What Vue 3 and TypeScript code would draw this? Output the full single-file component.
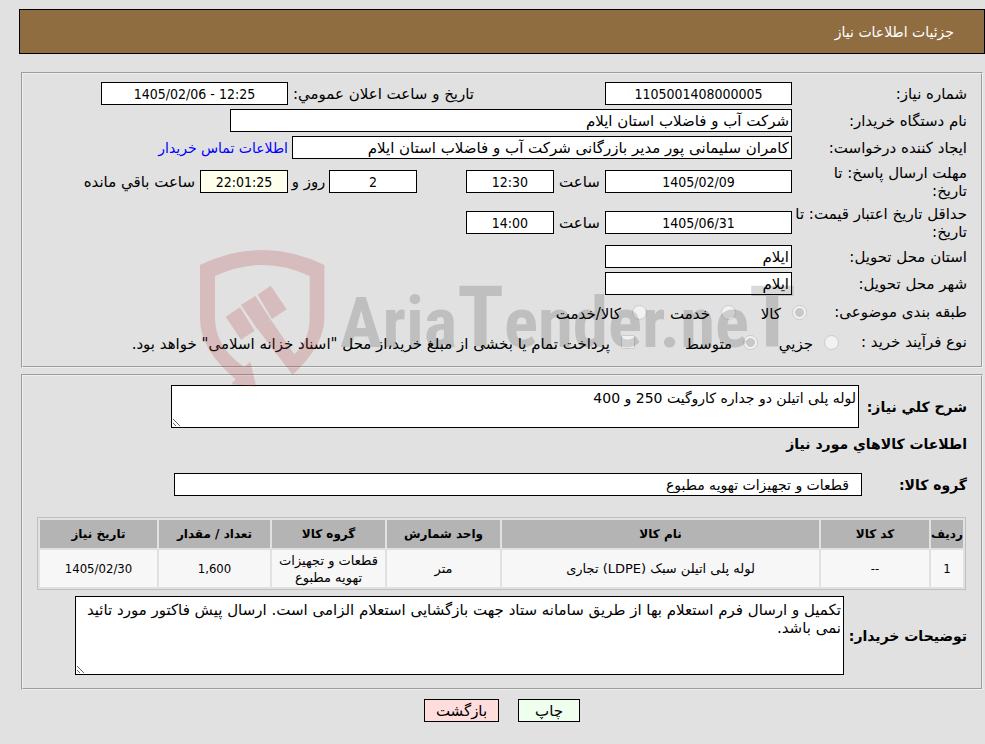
<script setup lang="ts">
import { ref } from 'vue'

interface Item {
  row: number
  code: string
  name: string
  unit: string
  group: string
  amount: string
  date: string
}

const category = ref('goods')
const process = ref('medium')
const treasury = ref(false)

const items: Item[] = [
  {
    row: 1,
    code: '--',
    name: 'لوله پلی اتیلن سبک (LDPE) تجاری',
    unit: 'متر',
    group: 'قطعات و تجهیزات تهویه مطبوع',
    amount: '1,600',
    date: '1405/02/30',
  },
]

const summary = 'لوله پلی اتیلن دو جداره کاروگیت 250 و 400'
const notes =
  'تکمیل و ارسال فرم استعلام بها از طریق سامانه ستاد جهت بازگشایی استعلام الزامی است. ارسال پیش فاکتور مورد تائید نمی باشد.'
</script>

<template>
  <main class="page" dir="rtl">
    <header class="title-bar">جزئیات اطلاعات نیاز</header>

    <fieldset class="panel info">
      <div class="row">
        <label class="caption" for="need-no">شماره نیاز:</label>
        <input id="need-no" class="field w-std center" readonly value="1105001408000005" />
        <label class="announce" for="announce">تاريخ و ساعت اعلان عمومي:</label>
        <input id="announce" class="field w-std center" dir="ltr" readonly value="1405/02/06 - 12:25" />
      </div>
      <div class="row">
        <label class="caption" for="buyer">نام دستگاه خریدار:</label>
        <input id="buyer" class="field w-buyer" readonly value="شرکت آب و فاضلاب استان ایلام" />
      </div>
      <div class="row">
        <label class="caption" for="creator">ایجاد کننده درخواست:</label>
        <input id="creator" class="field w-creator" readonly value="کامران سلیمانی پور مدیر بازرگانی شرکت آب و فاضلاب استان ایلام" />
        <a class="contact" href="#contact">اطلاعات تماس خریدار</a>
      </div>
      <div class="row tall">
        <label class="caption" for="reply-date">مهلت ارسال پاسخ: تا<br />تاریخ:</label>
        <input id="reply-date" class="field w-std center" readonly value="1405/02/09" />
        <label class="hour" for="reply-hour">ساعت</label>
        <input id="reply-hour" class="field w-small center" readonly value="12:30" />
        <input id="days" class="field w-small center days" readonly value="2" />
        <label class="day-word" for="days">روز و</label>
        <input id="remain" class="field w-small center timer" readonly value="22:01:25" />
        <label class="remain-word" for="remain">ساعت باقي مانده</label>
      </div>
      <div class="row tall">
        <label class="caption" for="price-date">حداقل تاریخ اعتبار قیمت: تا<br />تاریخ:</label>
        <input id="price-date" class="field w-std center" readonly value="1405/06/31" />
        <label class="hour" for="price-hour">ساعت</label>
        <input id="price-hour" class="field w-small center" readonly value="14:00" />
      </div>
      <div class="row">
        <label class="caption" for="province">استان محل تحویل:</label>
        <input id="province" class="field w-std" readonly value="ایلام" />
      </div>
      <div class="row">
        <label class="caption" for="city">شهر محل تحویل:</label>
        <input id="city" class="field w-std" readonly value="ایلام" />
      </div>
      <div class="row options" role="radiogroup" aria-labelledby="category-caption">
        <span id="category-caption" class="caption category">طبقه بندی موضوعی:</span>
        <label class="option o-goods"><input v-model="category" type="radio" name="category" value="goods" disabled /><span>کالا</span></label>
        <label class="option o-service"><input v-model="category" type="radio" name="category" value="service" disabled /><span>خدمت</span></label>
        <label class="option"><input v-model="category" type="radio" name="category" value="both" disabled /><span>کالا/خدمت</span></label>
      </div>
      <div class="row options" role="radiogroup" aria-labelledby="process-caption">
        <span id="process-caption" class="caption process">نوع فرآیند خرید :</span>
        <label class="option o-minor"><input v-model="process" type="radio" name="process" value="minor" disabled /><span>جزيي</span></label>
        <label class="option o-medium"><input v-model="process" type="radio" name="process" value="medium" disabled /><span>متوسط</span></label>
        <label class="option"><input v-model="treasury" type="checkbox" disabled /><span>پرداخت تمام یا بخشی از مبلغ خرید،از محل "اسناد خزانه اسلامی" خواهد بود.</span></label>
      </div>
    </fieldset>

    <fieldset class="panel goods">
      <div class="wide-row">
        <label class="strong w-summary" for="summary">شرح كلي نياز:</label>
        <textarea id="summary" class="field summary" readonly :value="summary"></textarea>
      </div>
      <h2 class="strong heading">اطلاعات كالاهاي مورد نياز</h2>
      <div class="wide-row">
        <label class="strong w-group" for="group">گروه کالا:</label>
        <input id="group" class="field group" readonly value="قطعات و تجهیزات تهویه مطبوع" />
      </div>
      <table class="items">
        <colgroup>
          <col class="c-row" /><col class="c-code" /><col /><col class="c-mid" /><col class="c-mid" /><col class="c-amount" /><col class="c-date" />
        </colgroup>
        <thead>
          <tr>
            <th>ردیف</th><th>کد کالا</th><th>نام کالا</th><th>واحد شمارش</th><th>گروه کالا</th><th>تعداد / مقدار</th><th>تاریخ نیاز</th>
          </tr>
        </thead>
        <tbody>
          <tr v-for="item in items" :key="item.row">
            <td class="num">{{ item.row }}</td>
            <td class="num">{{ item.code }}</td>
            <td>{{ item.name }}</td>
            <td>{{ item.unit }}</td>
            <td>{{ item.group }}</td>
            <td class="num">{{ item.amount }}</td>
            <td class="num">{{ item.date }}</td>
          </tr>
        </tbody>
      </table>
      <div class="wide-row">
        <label class="strong w-notes" for="notes">توضیحات خریدار:</label>
        <textarea id="notes" class="field notes" readonly :value="notes"></textarea>
      </div>
    </fieldset>

    <div class="actions">
      <button type="button" class="print">چاپ</button>
      <button type="button" class="back">بازگشت</button>
    </div>

    <div class="watermark" dir="ltr">
      <svg width="144" height="147" viewBox="0 0 432 441" aria-hidden="true">
        <g transform="translate(-48 0)" fill="#b43c41">
          <path d="M60 75Q247-15 433 75V235Q433 315 338 405L232 266L273 240L343 343Q389 300 389 235V108Q247 42 105 108V235Q105 320 193 382L211 365L229 440L153 433L167 418Q60 330 60 235Z" />
          <path d="M137 230L180 202L224 272L183 299Z" />
          <path d="M183 195L226 168L273 240L232 268Z" />
          <path d="M233 164L272 137L320 208L276 237Z" />
        </g>
      </svg>
      <span class="brand">Aria<span class="tee">T</span>ender.ne<span class="tee">T</span></span>
    </div>
  </main>
</template>

<style>
body {
  margin: 0;
  background: #e1e1e1;
}
</style>

<style scoped>
.page {
  position: relative;
  padding: 9px 0 20px 19px;
  font: 15px/18px 'DejaVu Sans', sans-serif;
  color: #000;
}
.title-bar {
  box-sizing: border-box;
  height: 45px;
  padding: 13px 30px;
  border: 1px solid #000;
  background: #8f6d40;
  color: #fff;
  font-size: 14px;
}
.panel {
  min-width: 0;
  margin: 0 2px 6px;
  border: 2px groove #f0f0f0;
  padding: 8px 14px 11px;
}
.info {
  margin-top: 18px;
}
.row {
  display: flex;
  align-items: center;
  min-height: 23px;
  margin-bottom: 4px;
  white-space: nowrap;
}
.tall {
  min-height: 37px;
}
.options {
  min-height: 26px;
}
.options:last-child {
  margin-bottom: 0;
}
.caption {
  flex: none;
  width: 175px;
}
.category {
  width: 160px;
}
.process {
  width: 128px;
}
.field {
  box-sizing: border-box;
  flex: none;
  height: 23px;
  margin: 0;
  border: 1px solid #000;
  border-radius: 0;
  padding: 1px 2px;
  background: #fff;
  color: #000;
  font: inherit;
  outline: none;
}
.center {
  text-align: center;
  font-family: 'DejaVu Sans Condensed', 'DejaVu Sans', sans-serif;
  font-size: 14px;
}
.w-std {
  width: 187px;
}
.w-small {
  width: 88px;
}
.w-buyer {
  width: 562px;
}
.w-creator {
  width: 500px;
}
.announce {
  box-sizing: border-box;
  width: 317px;
  padding-left: 5px;
  text-align: left;
}
.contact {
  margin-right: 4px;
  color: #00f;
  font-size: 14px;
  text-decoration: none;
}
.hour {
  width: 51px;
  text-align: center;
}
.days {
  margin-right: 49px;
}
.day-word {
  width: 41px;
  text-align: center;
}
.timer {
  background: #ffffee;
}
.remain-word {
  margin-right: 5px;
}
.option {
  display: flex;
  flex: none;
  align-items: center;
  gap: 11px;
}
.option span {
  padding-top: 4px;
}
.o-goods {
  width: 71px;
}
.o-service {
  width: 89px;
}
.o-minor {
  width: 81px;
}
.o-medium {
  width: 123px;
}
.option input {
  appearance: none;
  box-sizing: border-box;
  flex: none;
  width: 15px;
  height: 15px;
  margin: 0;
  border: 1px solid #cbcbcb;
  border-radius: 50%;
  background: #f2f2f2;
}
.option input[type='checkbox'] {
  width: 14px;
  height: 14px;
  border-radius: 2px;
}
.option input[type='radio']:checked {
  background: radial-gradient(circle, #c8c8c8 4px, #f2f2f2 5px);
}
.strong {
  flex: none;
  font-size: 14px;
  font-weight: bold;
}
.goods {
  padding-top: 9px;
  padding-bottom: 13px;
}
.wide-row {
  display: flex;
  align-items: center;
}
.w-summary {
  width: 108px;
}
.w-group {
  width: 105px;
}
.w-notes {
  width: 123px;
}
.summary {
  flex: 0 1 688px;
  height: 43px;
  padding-top: 3px;
  font-size: 14px;
}
.heading {
  margin: 7px 0 20px;
  line-height: 18px;
}
.group {
  flex: 0 1 688px;
  padding-right: 12px;
  font-size: 14px;
}
.notes {
  flex: 0 1 769px;
  height: 79px;
  padding-top: 4px;
}
.items {
  width: calc(100% - 1px);
  margin: 21px 1px 6px 0;
  border: 1px solid #c0c0c0;
  border-collapse: separate;
  border-spacing: 2px;
  table-layout: fixed;
  font-size: 13px;
  line-height: 17px;
  text-align: center;
}
.items th {
  height: 28px;
  padding: 0;
  background: #b4b4b4;
  font-size: 12px;
  white-space: nowrap;
}
.items td {
  height: 37px;
  padding: 0;
  background: #f7f7f7;
}
.items .num {
  font-family: 'DejaVu Sans Condensed', 'DejaVu Sans', sans-serif;
}
.c-row {
  width: 32px;
}
.c-code {
  width: 108px;
}
.c-mid {
  width: 113px;
}
.c-amount {
  width: 111px;
}
.c-date {
  width: 117px;
}
.actions {
  display: flex;
  justify-content: center;
  gap: 19px;
  margin-top: 9px;
}
.actions button {
  box-sizing: border-box;
  height: 23px;
  border: 1px solid #000;
  padding: 0;
  color: #000;
  font: inherit;
}
.actions .print {
  width: 62px;
  background: #eeffee;
}
.actions .back {
  width: 75px;
  background: #ffdddd;
}
.watermark {
  position: absolute;
  top: 240px;
  left: 196px;
  display: flex;
  align-items: flex-start;
  pointer-events: none;
}
.watermark svg {
  opacity: 0.22;
}
.brand {
  padding-top: 32px;
  color: rgba(0, 0, 0, 0.15);
  font: bold 71px/92px 'Liberation Sans Narrow', 'Roboto Condensed', 'DejaVu Sans Condensed', sans-serif;
  white-space: nowrap;
}
.tee {
  font-size: 86px;
}
</style>
